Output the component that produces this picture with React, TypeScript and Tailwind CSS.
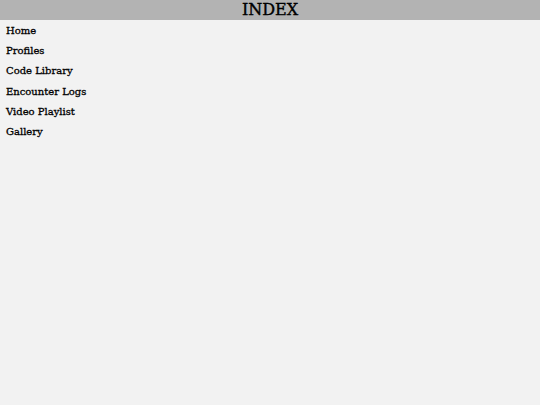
export default function App() {
  const items = ["Home", "Profiles", "Code Library", "Encounter Logs", "Video Playlist", "Gallery"];
  return (
    <div className="w-[540px] h-[405px] bg-[#f2f2f2] text-black" style={{ fontFamily: '"DejaVu Serif", serif' }}>
      <div className="h-[20px] bg-[#b3b3b3] flex items-center justify-center text-[16px] leading-none [-webkit-text-stroke:0.4px]">INDEX</div>
      <ul className="pl-[6px]">
        {items.map((t) => (
          <li key={t} className="h-[20.3px] flex items-center text-[10px] [-webkit-text-stroke:0.3px]">{t}</li>
        ))}
      </ul>
    </div>
  );
}
